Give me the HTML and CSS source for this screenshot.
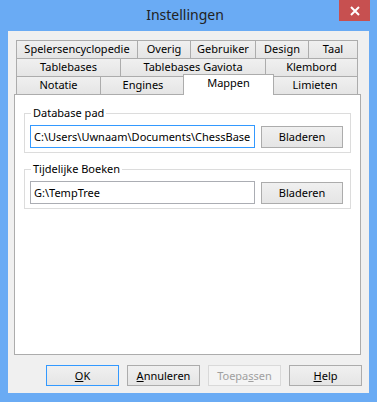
FILE: index.html
```html
<!DOCTYPE html>
<html lang="nl">
<head>
    <meta charset="UTF-8">
    <title>Instellingen</title>
    <link rel="stylesheet" href="styles.css">
</head>
<body>
    <div class="window">
        <div class="titlebar">
            <span></span>
            <div class="title">Instellingen</div>
            <div class="close">
                <svg width="10" height="10" viewBox="0 0 10 10">
                    <path d="M1 1 L9 9 M9 1 L1 9" stroke="#fff" stroke-width="2"/>
                </svg>
            </div>
        </div>
        <div class="client">
            <div class="tabs">
                <div class="tab-row">
                    <div class="tab" style="width: 121px">Spelersencyclopedie</div>
                    <div class="tab" style="width: 53px">Overig</div>
                    <div class="tab" style="width: 65px">Gebruiker</div>
                    <div class="tab" style="width: 53px">Design</div>
                    <div class="tab" style="width: 50px">Taal</div>
                </div>
                <div class="tab-row">
                    <div class="tab" style="width: 104px">Tablebases</div>
                    <div class="tab" style="width: 145px">Tablebases Gaviota</div>
                    <div class="tab" style="width: 93px">Klembord</div>
                </div>
                <div class="tab-row">
                    <div class="tab" style="width: 84px">Notatie</div>
                    <div class="tab" style="width: 85px">Engines</div>
                    <div class="tab active" style="width: 91px">Mappen</div>
                    <div class="tab" style="width: 86px">Limieten</div>
                </div>
            </div>
            <div class="panel">
                <fieldset class="group">
                    <legend>Database pad</legend>
                    <div class="path-row">
                        <input type="text" class="focused" value="C:\Users\Uwnaam\Documents\ChessBase">
                        <button class="btn">Bladeren</button>
                    </div>
                </fieldset>
                <fieldset class="group">
                    <legend>Tijdelijke Boeken</legend>
                    <div class="path-row">
                        <input type="text" value="G:\TempTree">
                        <button class="btn">Bladeren</button>
                    </div>
                </fieldset>
            </div>
            <div class="dialog-buttons">
                <button class="btn default"><u>O</u>K</button>
                <button class="btn"><u>A</u>nnuleren</button>
                <button class="btn" disabled>Toepa<u>s</u>sen</button>
                <button class="btn"><u>H</u>elp</button>
            </div>
        </div>
    </div>
</body>
</html>
```

FILE: styles.css
```css
* {
    margin: 0;
    padding: 0;
    box-sizing: border-box;
}

body {
    font-family: 'Noto Sans', sans-serif;
    font-size: 11px;
    color: #000;
    background: #fff;
}

.window {
    width: 377px;
    height: 402px;
    background: #6aabf4;
    display: flex;
    flex-direction: column;
}

.titlebar {
    height: 31px;
    display: grid;
    grid-template-columns: 1fr auto 1fr;
    align-items: start;
    padding-right: 7px;
}

.title {
    font-size: 14px;
    line-height: 20px;
    padding-top: 5px;
    color: #222;
}

.close {
    justify-self: end;
    width: 31px;
    height: 21px;
    background: #c75050;
    display: flex;
    align-items: center;
    justify-content: center;
}

.client {
    flex: 1;
    margin: 0 8px 9px 8px;
    background: #f0f0f0;
    display: flex;
    flex-direction: column;
    padding: 9px 8px 7px 6px;
}

.tabs {
    padding-left: 2px;
}

.tab-row {
    display: flex;
    height: 18px;
    align-items: flex-start;
}

.tab {
    height: 18px;
    line-height: 16px;
    text-align: center;
    border-top: 1px solid #acacac;
    border-left: 1px solid #acacac;
    background: linear-gradient(#f0f0f0, #e5e5e5);
    white-space: nowrap;
}

.tab:last-child {
    border-right: 1px solid #acacac;
}

.tab.active {
    position: relative;
    z-index: 2;
    margin: -2px -2px 0 -2px;
    height: 21px;
    background: #fff;
    border-right: 1px solid #acacac;
}

.panel {
    flex: 1;
    background: #fff;
    border: 1px solid #acacac;
    padding: 10px 9px 0 9px;
}

.group {
    border: 1px solid #dcdcdc;
    padding: 4px 7px 4px 5px;
}

.group + .group {
    margin-top: 8px;
}

.group legend {
    padding: 0 2px;
    margin-left: 1px;
    line-height: 16px;
}

.path-row {
    display: flex;
    align-items: center;
    gap: 6px;
}

.path-row input {
    width: 225px;
    height: 23px;
    border: 1px solid #abadb3;
    padding: 0 3px;
    font-family: inherit;
    font-size: 11px;
    color: #000;
    outline: none;
}

.path-row input.focused {
    border-color: #3399ff;
}

.btn {
    height: 21px;
    border: 1px solid #acacac;
    background: linear-gradient(#f0f0f0, #e5e5e5);
    font-family: inherit;
    font-size: 11px;
    color: #000;
}

.path-row .btn {
    width: 82px;
    height: 22px;
}

.btn.default {
    border-color: #3399ff;
}

.btn:disabled {
    border-color: #d9d9d9;
    background: #f4f4f4;
    color: #a0a0a0;
}

.dialog-buttons {
    display: flex;
    justify-content: flex-end;
    gap: 8px;
    margin-top: 10px;
    margin-right: -1px;
}

.dialog-buttons .btn {
    width: 73px;
}
```
